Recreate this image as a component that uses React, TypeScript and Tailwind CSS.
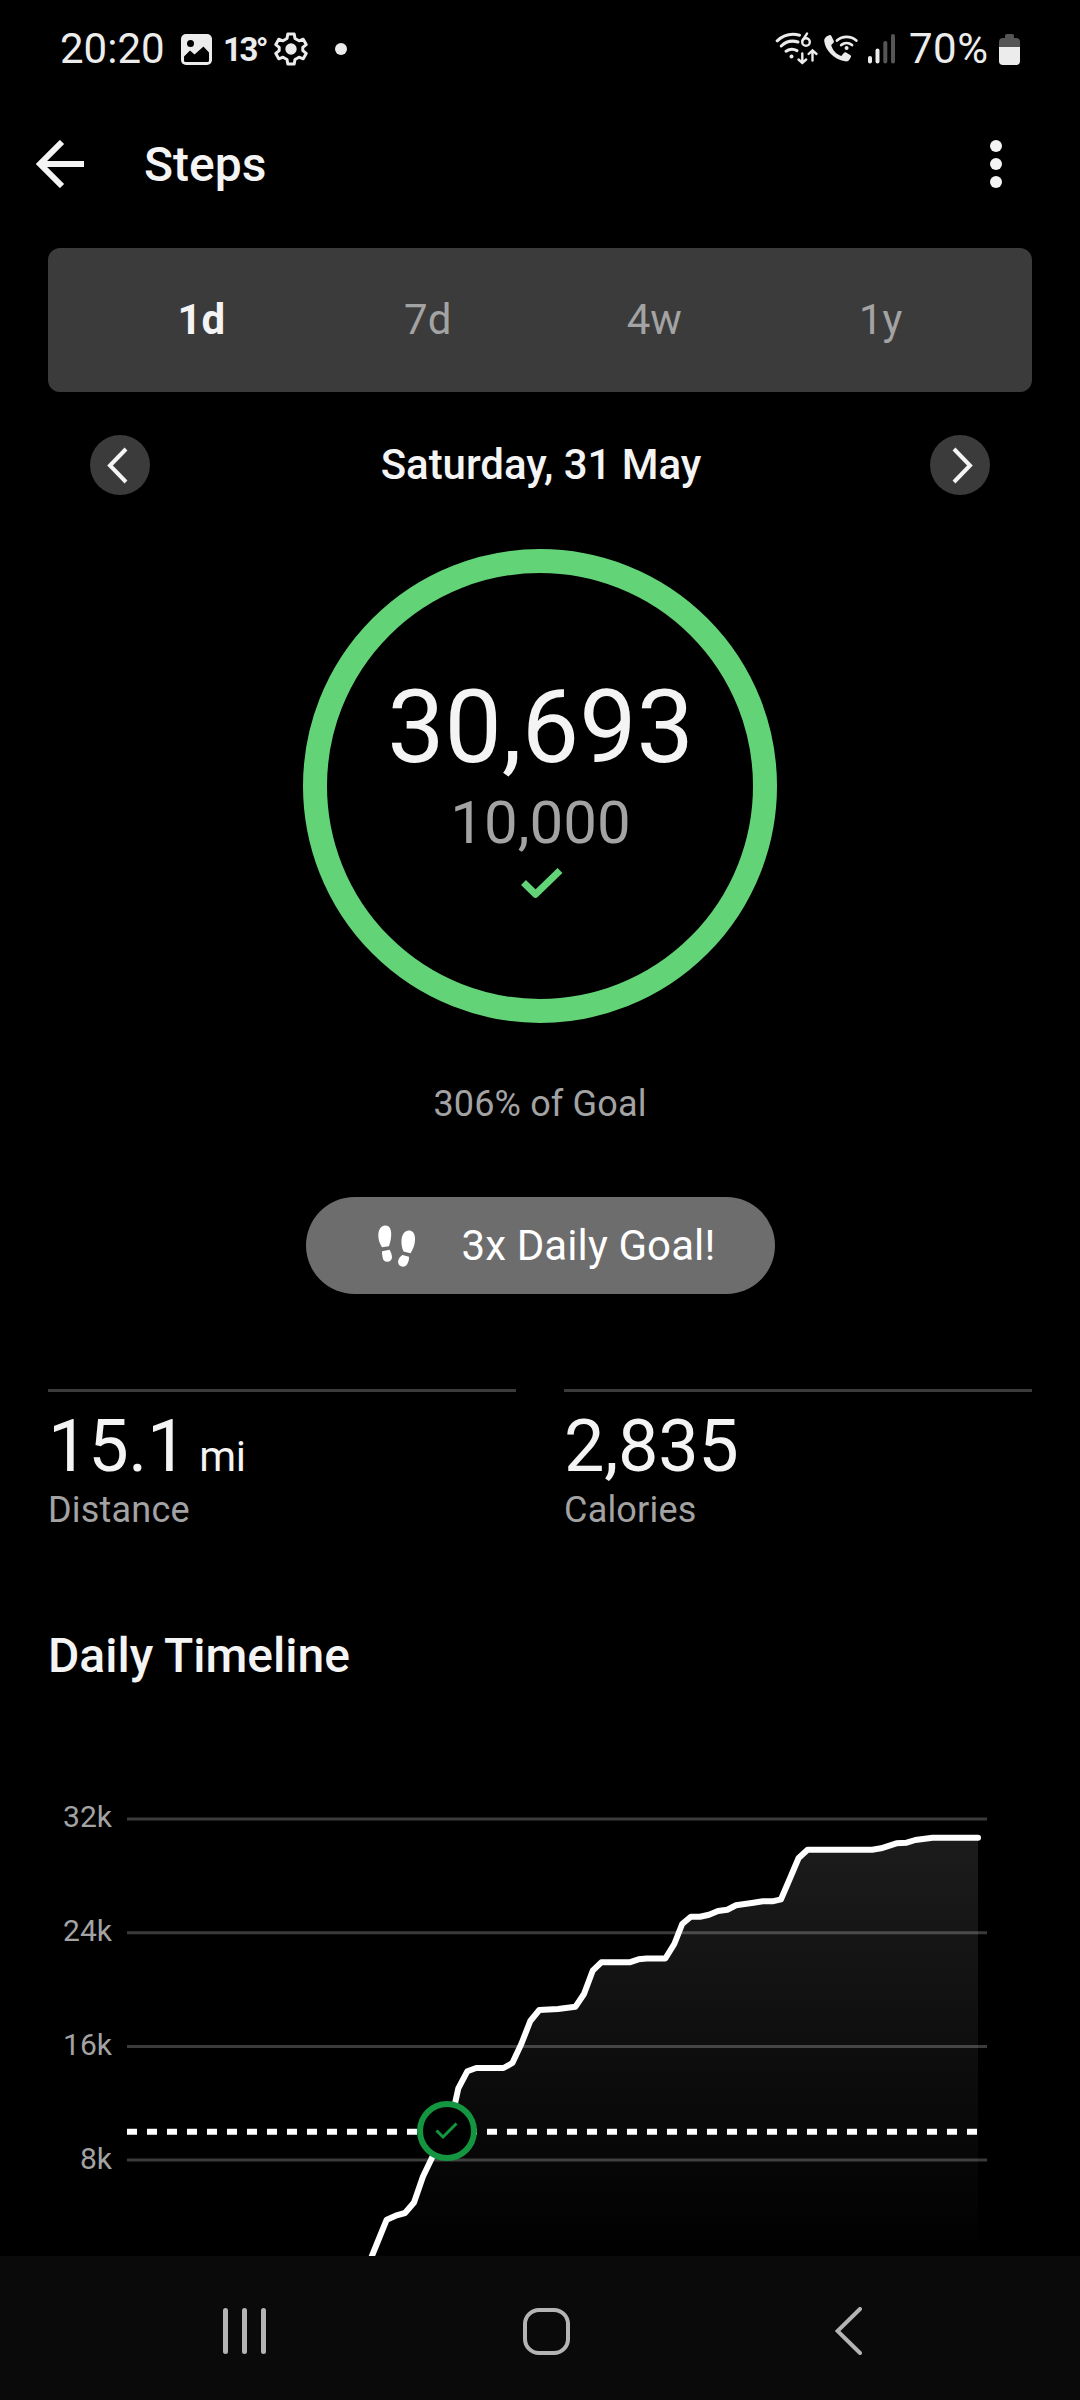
import React from 'react';

const ranges = [
  { label: '1d', active: true },
  { label: '7d', active: false },
  { label: '4w', active: false },
  { label: '1y', active: false },
];

const gridLines = [
  { label: '32k', y: 135, textY: 142.5 },
  { label: '24k', y: 248.7, textY: 256.5 },
  { label: '16k', y: 362.5, textY: 370.5 },
  { label: '8k', y: 476, textY: 484.5 },
];

const stepsLine =
  '365,589 378,557 386.7,535.7 395.7,531.7 405,529 414,518.5 423,492.5 432,473.7 447,447 455.2,418.7 458.3,404.3 467.3,387.3 476.2,384 503.5,384 512.4,379 521.3,360 530.3,337 539.3,326 548.6,325.6 558,325 575.5,322.7 584,310 592.7,286.7 601.3,278.3 629.5,278.3 638.5,275.3 646.7,274.5 665.3,274.5 674.3,260 682.2,240 690.8,232.7 700,232.7 709,230.7 718,227 727.3,225.7 736,221.3 753.5,218.7 762.8,217.3 772.4,217.3 781,215.3 789.7,195 798.6,174 807.6,165.7 872.3,165.7 881,164.3 896.4,159.3 906.7,158.7 915.3,156 932.6,153.7 978,153.7';

const StatusBar = () => {
  return (
    <div className="flex h-[98px] items-center pl-[60px] pr-[60px] text-[#ececec]">
      <span className="w-[121px] text-[42px] leading-none">20:20</span>

      {/* Gallery */}
      <svg className="h-[31px] w-[31px]" viewBox="0 0 31 31" fill="none">
        <rect width="31" height="31" rx="5" fill="#ececec" />
        <circle cx="9.5" cy="9.5" r="3.5" fill="#000" />
        <path d="M3 22.5 9 16.5 13.5 20.5 22.5 12.5 28 18.5V26.5Q28 28 26.5 28H4.5Q3 28 3 26.5Z" fill="#000" />
      </svg>
      <span className="ml-[11px] w-[51px] text-[33px] font-bold leading-none tracking-[-2.5px]">13°</span>

      {/* Settings */}
      <svg className="h-[34px] w-[34px]" viewBox="0 0 34 34" fill="none">
        <path
          d="M13.8 2H20.2L21 6.5 25 8.8 29.2 7.2 32.2 12.6 28.8 15.4V18.6L32.2 21.4 29.2 26.8 25 25.2 21 27.5 20.2 32H13.8L13 27.5 9 25.2 4.8 26.8 1.8 21.4 5.2 18.6V15.4L1.8 12.6 4.8 7.2 9 8.8 13 6.5Z"
          stroke="#ececec"
          strokeWidth="3"
          strokeLinejoin="round"
        />
        <circle cx="17" cy="17" r="5.7" fill="#ececec" />
      </svg>
      <span className="ml-[27px] h-3 w-3 rounded-full bg-[#ececec]" />

      {/* Wi-Fi 6 with data arrows */}
      <svg className="ml-auto h-[34px] w-[44px]" viewBox="0 0 44 34" fill="none" stroke="#ececec" strokeLinecap="round">
        <path d="M2.2 8.8A24 24 0 0 1 24.5 3.2" strokeWidth="3" />
        <path d="M6.2 14A17 17 0 0 1 23 10" strokeWidth="3" />
        <path d="M11 19.2A10.5 10.5 0 0 1 22 18.6" strokeWidth="3" />
        <circle cx="16.5" cy="24.5" r="2" fill="#ececec" stroke="none" />
        <circle cx="31" cy="10" r="3.8" strokeWidth="2.4" />
        <path d="M27.5 8.5 32 1.6" strokeWidth="2.4" />
        <path d="M27.3 21.5V31M23.5 27.5 27.3 31 31.2 27.5" strokeWidth="2.4" />
        <path d="M37.5 28.5V18.5M33.6 22 37.5 18.3 41.5 22" strokeWidth="2.4" />
      </svg>

      {/* Wi-Fi calling */}
      <svg className="ml-1 h-[34px] w-[36px]" viewBox="0 0 36 34" fill="none">
        <path
          d="M6.2 3.2C7 2.8 8 3.2 8.4 4L10.8 9C11.1 9.8 10.9 10.5 10.3 11L8.2 13C9.2 18 13.5 22.5 18.3 24L20.8 20.9C21.4 20.2 22.2 20.1 23 20.5L27.2 22.9C28 23.4 28.3 24.2 27.9 25L26.5 27.5C25.6 29.2 24 29.7 22 29.3C11 27.5 2.3 18.5 1.2 9C1 6.5 2.5 4.5 6.2 3.2Z"
          fill="#ececec"
        />
        <path d="M14 8.5A14.5 14.5 0 0 1 33.3 8.5M18.2 13A8.6 8.6 0 0 1 29 13" stroke="#ececec" strokeWidth="2.8" strokeLinecap="round" />
        <circle cx="23.6" cy="16" r="2" fill="#ececec" />
      </svg>

      {/* Signal */}
      <svg className="ml-[9px] h-[30px] w-[28px]" viewBox="0 0 28 30">
        <rect x="0" y="22" width="4" height="7.5" rx="2" fill="#ececec" />
        <rect x="7.5" y="14.5" width="4" height="15" rx="2" fill="#ececec" />
        <rect x="15.3" y="7" width="4" height="22.5" rx="2" fill="#555" />
        <rect x="23" y="0" width="4" height="29.5" rx="2" fill="#555" />
      </svg>
      <span className="ml-[13px] w-[84px] whitespace-nowrap text-[42px] leading-none tracking-[0.5px]">70%</span>

      {/* Battery */}
      <svg className="ml-[6px] h-[31px] w-[21px]" viewBox="0 0 21 31">
        <path d="M6 4V2Q6 0 8 0H13Q15 0 15 2V4H17Q21 4 21 8V14H0V8Q0 4 4 4Z" fill="#555" />
        <path d="M0 13H21V27Q21 31 17 31H4Q0 31 0 27Z" fill="#ececec" />
      </svg>
    </div>
  );
};

const ArrowButton = ({ direction }: { direction: 'left' | 'right' }) => {
  return (
    <button className="flex h-[60px] w-[60px] items-center justify-center rounded-full bg-[#3b3b3b]">
      <svg className="h-[60px] w-[60px]" viewBox="0 0 60 60" fill="none" stroke="#f4f4f4" strokeWidth="4">
        <path d={direction === 'left' ? 'M36 14 20 30.5 36 47' : 'M24 14 40 30.5 24 47'} />
      </svg>
    </button>
  );
};

const Stat = ({ value, unit, label }: { value: string; unit?: string; label: string }) => {
  return (
    <div className="flex-1 border-t-[3px] border-[#3b3b3b] pt-[13px]">
      <div className="text-[72px] leading-[84px] tracking-[-0.3px]">
        {value}
        {unit && <span className="ml-[12px] text-[42px] leading-none tracking-[-0.3px]">{unit}</span>}
      </div>
      <div className="text-[36px] leading-[42px] tracking-[0.2px] text-[#a3a3a3]">{label}</div>
    </div>
  );
};

const TimelineChart = () => {
  return (
    <svg className="h-[572px] w-[1080px]" viewBox="0 0 1080 572" fill="none">
      <defs>
        <linearGradient id="area" gradientUnits="userSpaceOnUse" x1="0" y1="154" x2="0" y2="580">
          <stop offset="0" stopColor="#fff" stopOpacity="0.11" />
          <stop offset="1" stopColor="#fff" stopOpacity="0" />
        </linearGradient>
      </defs>

      {gridLines.map((line) => (
        <g key={line.label}>
          <text x="112" y={line.textY} textAnchor="end" fontSize="30" fill="#a3a3a3">
            {line.label}
          </text>
          <path d={`M127 ${line.y}H987`} stroke="#3b3b3b" strokeWidth="3" />
        </g>
      ))}

      <polygon points={`${stepsLine} 978,589`} fill="url(#area)" />
      <path d="M127 447.7H978" stroke="#fff" strokeWidth="6" strokeDasharray="10 10" />
      <polyline points={stepsLine} stroke="#fff" strokeWidth="6" strokeLinecap="round" strokeLinejoin="round" />

      {/* Goal reached marker */}
      <circle cx="447" cy="447" r="27" fill="#000" stroke="#149641" strokeWidth="6" />
      <path d="M436.5 446.5 443 453 456.5 439.5" stroke="#149641" strokeWidth="3" />
    </svg>
  );
};

const App = () => {
  return (
    <div className="flex h-[2400px] w-[1080px] flex-col overflow-hidden bg-black font-['Roboto',sans-serif] text-[#f4f4f4]">
      <StatusBar />

      {/* Header */}
      <header className="flex h-[132px] items-center pl-9 pr-[78px]">
        <svg className="h-12 w-12" viewBox="0 0 48 48" fill="none" stroke="#f4f4f4" strokeWidth="6">
          <path d="M26 2 4 24 26 46M4 24H48" />
        </svg>
        <h1 className="ml-[60px] mt-0.5 text-[48px] font-medium leading-[56px]">Steps</h1>
        <div className="ml-auto flex flex-col gap-1.5">
          <span className="h-3 w-3 rounded-full bg-[#f4f4f4]" />
          <span className="h-3 w-3 rounded-full bg-[#f4f4f4]" />
          <span className="h-3 w-3 rounded-full bg-[#f4f4f4]" />
        </div>
      </header>

      {/* Range tabs */}
      <div className="mx-12 mt-[18px] flex h-36 items-center rounded-xl bg-[#3b3b3b] px-[38px]">
        {ranges.map((range) => (
          <button
            key={range.label}
            className={
              range.active
                ? 'flex-1 pl-0.5 text-[42px] font-bold leading-[48px]'
                : 'flex-1 text-[42px] leading-[48px] text-[#a3a3a3]'
            }
          >
            {range.label}
          </button>
        ))}
      </div>

      {/* Date switcher */}
      <div className="mt-[43px] flex h-[60px] items-center justify-between px-[90px]">
        <ArrowButton direction="left" />
        <span className="ml-0.5 text-[42px] font-medium leading-[48px] tracking-[-0.05px]">Saturday, 31 May</span>
        <ArrowButton direction="right" />
      </div>

      {/* Goal ring */}
      <div className="mx-auto mt-[54px] flex h-[474px] w-[474px] flex-col items-center rounded-full border-[24px] border-[#63d377] pt-[94px]">
        <span className="ml-px text-[102px] leading-[120px]">30,693</span>
        <span className="ml-px mt-px text-[60px] leading-[70px] text-[#a3a3a3]">10,000</span>
        <svg className="ml-1 mt-[10px] h-[30px] w-[42px]" viewBox="0 0 42 30" fill="none" stroke="#63d377" strokeWidth="7" strokeLinejoin="round">
          <path d="M2.5 14.5 14.5 26.3 39 2.5" />
        </svg>
      </div>
      <p className="mt-[60px] text-center text-[36px] leading-[42px] tracking-[0.15px] text-[#a3a3a3]">306% of Goal</p>

      {/* Badge */}
      <div className="mx-auto mt-[72px] flex h-[97px] w-[469px] items-center rounded-full bg-[#6d6d6d] pl-[72px] text-white">
        <svg className="h-[42px] w-[38px]" viewBox="0 0 38 42" fill="#fff">
          <path d="M7 .6C10.5.2 13 3 13.2 8C13.4 13 12.4 17 11 21.3L4 22.2C1.5 18.5.3 14.5.3 10.5C.3 5 2.8 1 7 .6Z" />
          <path d="M4.2 26.2 11.5 24.8C13 27 14 30 14 32.3C14 35 12 36.8 9.3 36.8C6.5 36.8 4.8 35 4.6 32.3C4.4 30 3.6 28 4.2 26.2Z" />
          <path d="M31.5 5.6C35.5 6 37.2 10 37 15C36.8 20 35 24.5 32.5 28.3L25.5 26.5C23.8 23 23.3 19 23.5 15C23.8 9.5 27 5.2 31.5 5.6Z" />
          <path d="M24.5 30 31 31.7C31.3 34 30.5 37 29.3 39C27.9 41.5 25.5 42.2 23 41.3C20.5 40.4 19.7 38 20.3 35.5C20.9 33 22.5 31 24.5 30Z" />
        </svg>
        <span className="ml-[46px] whitespace-nowrap text-[42px] leading-[48px] tracking-[0.1px]">3x Daily Goal!</span>
      </div>

      {/* Stats */}
      <div className="mx-12 mt-[95px] flex gap-12">
        <Stat value="15.1" unit="mi" label="Distance" />
        <Stat value="2,835" label="Calories" />
      </div>

      <h2 className="ml-12 mt-24 text-[48px] font-medium leading-[57px]">Daily Timeline</h2>
      <TimelineChart />

      {/* Navigation bar */}
      <nav className="h-36 shrink-0 bg-[#0a0a0a]">
        <div className="flex h-[150px] items-center justify-between pl-[223px] pr-[215px]">
          <div className="flex gap-[14.5px]">
            <span className="h-[46px] w-[4.5px] rounded-full bg-[#b4b4b4]" />
            <span className="h-[46px] w-[4.5px] rounded-full bg-[#b4b4b4]" />
            <span className="h-[46px] w-[4.5px] rounded-full bg-[#b4b4b4]" />
          </div>
          <span className="mr-[8px] h-[47px] w-[47px] rounded-[16px] border-[4px] border-[#b4b4b4]" />
          <svg className="h-12 w-[30px]" viewBox="0 0 30 48" fill="none" stroke="#b4b4b4" strokeWidth="4" strokeLinecap="round">
            <path d="M25 2 2.5 24 25 46" />
          </svg>
        </div>
      </nav>
    </div>
  );
};

export default App;
